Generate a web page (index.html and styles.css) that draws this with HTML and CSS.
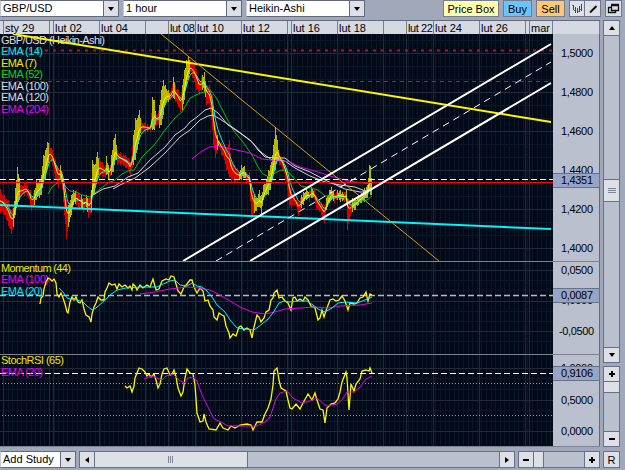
FILE: index.html
```html
<!DOCTYPE html>
<html lang="en">
<head>
  <meta charset="UTF-8">
  <title>GBP/USD chart</title>
  <link rel="stylesheet" href="styles.css">
</head>
<body>
  <header class="toolbar">
    <div class="select"><span class="value">GBP/USD</span><span class="drop"><i class="tri down"></i></span></div>
    <div class="select"><span class="value">1 hour</span><span class="drop"><i class="tri down"></i></span></div>
    <div class="select"><span class="value">Heikin-Ashi</span><span class="drop"><i class="tri down"></i></span></div>
    <div class="actions">
      <button class="btn price-box">Price Box</button>
      <button class="btn buy">Buy</button>
      <button class="btn sell">Sell</button>
      <div class="tools">
        <button class="tool"><svg width="14" height="14" viewBox="0 0 14 14"><path d="M3.500 3v5M5.500 5v6M7.500 6v5M9.500 4v6M11.500 2v7" stroke="#444" fill="none"/><path d="M2 3.500h1M4 8.500h1M8 9.500h1M10 7.500h1" stroke="#777"/></svg></button>
        <button class="tool"><svg width="14" height="14" viewBox="0 0 14 14"><path d="M4 10.500L10.500 4" stroke="#111" stroke-width="2"/></svg></button>
      </div>
      <button class="tool window"><svg width="15" height="14" viewBox="0 0 15 14"><path d="M5.500 3.500h7v5h-7zM5 2.500h8M5 5.500H2.500v5h7V9" stroke="#111" fill="none" stroke-width="1.300"/></svg></button>
    </div>
  </header>

  <main class="workspace">
    <section class="chart">
      <div class="dates">
        <span class="w-edge"></span>
        <span class="w-day">sty 29</span>
        <span class="w-gap"></span>
        <span class="w-day">lut 02</span>
        <span class="w-day">lut 04</span>
        <span class="w-half"></span>
        <span class="w-08">lut 08</span>
        <span class="w-10">lut 10</span>
        <span class="w-day">lut 12</span>
        <span class="w-gap"></span>
        <span class="w-16">lut 16</span>
        <span class="w-day">lut 18</span>
        <span class="w-half"></span>
        <span class="w-22">lut 22</span>
        <span class="w-day">lut 24</span>
        <span class="w-day">lut 26</span>
        <span class="w-gap"></span>
        <span class="w-mar">mar</span>
        <span class="w-axis"></span>
      </div>

      <div class="panel price">
        <svg class="plot" id="price" viewBox="0 34 553 227">
          <g class="grid"></g>
          <path class="level thick" d="M5 50.500H552"/>
          <path class="level" d="M0 81.500H552"/>
          <g class="labels">
            <text x="1" y="44" class="light" textLength="104">GBP/USD (Heikin-Ashi)</text>
            <text x="1" y="55" class="cyan" textLength="42">EMA (14)</text>
            <text x="1" y="67" class="yellow" textLength="36">EMA (7)</text>
            <text x="1" y="78" class="green" textLength="42">EMA (52)</text>
            <text x="1" y="90" class="light" textLength="48">EMA (100)</text>
            <text x="1" y="101" class="light" textLength="48">EMA (120)</text>
            <text x="1" y="113" class="magenta" textLength="48">EMA (204)</text>
          </g>
          <g id="bars"></g>
          <polyline class="line green" points="48,194 52,187 57,183 62,182 66,187 70,191 76,192 82,195 90,197 95,193 100,189 108,183 115,180 122,174 128,171 134,170 142,157 155,144 165,130 175,118 182,112 190,98 200,93 211,91 217,99 225,115 233,130 243,142 252,155 258,167 263,174 269,177 275,173 281,170 287,171 293,177 301,186 310,188 318,190 325,196 335,196 345,198 352,202 360,201 367,200 372,196"/>
          <polyline class="line light" points="93,195 103,189 115,186 128,177 138,173 150,160 165,147 175,135 185,128 190,122 197,117 205,110 211,108 218,113 228,125 240,133 252,142 258,150 265,157 275,158 285,158 295,166 310,172 325,180 345,189 360,192 367,192 371,188"/>
          <polyline class="line light" points="113,189 120,185 135,178 150,167 165,153 180,137 190,130 200,120 208,116 213,115 220,119 235,129 250,140 262,153 272,160 285,161 295,168 310,176 325,182 340,185 355,187 365,191 372,190"/>
          <polyline class="line magenta" points="192,159 202,151 210,147 220,146 232,149 250,153 262,159 280,161 290,162 300,167 315,171 330,176 345,180 355,182 371,184"/>
          <polyline class="line cyan" id="ema14"/>
          <polyline class="line yellow" id="ema7"/>
          <path class="current" d="M0 179.500H553"/>
          <path class="support" d="M0 182.500H553"/>
          <path class="trend cyan" d="M0 205L551 229"/>
          <path class="trend yellow" d="M13 34L551 122"/>
          <path class="line orange" d="M161 34L439 261"/>
          <path class="trend white" d="M183 261L551 44M250 261L551 83"/>
          <path class="line white mid" d="M216 261L551 62"/>
        </svg>
        <svg class="axis" viewBox="553 34 47 227">
          <text x="561" y="57" textLength="32">1,5000</text>
          <text x="561" y="96" textLength="32">1,4800</text>
          <text x="561" y="135" textLength="32">1,4600</text>
          <text x="561" y="174" textLength="32">1,4400</text>
          <text x="561" y="213" textLength="32">1,4200</text>
          <text x="561" y="252" textLength="32">1,4000</text>
          <rect x="552" y="173.500" width="47.500" height="14"/>
          <text x="561" y="184" textLength="32">1,4351</text>
        </svg>
      </div>

      <div class="panel study">
        <svg class="plot" viewBox="0 261 553 92">
          <g class="grid"></g>
          <path class="divider" d="M0 261.500H553"/>
          <path class="current dim" d="M0 295.500H553"/>
          <g class="labels">
            <text x="1" y="272" class="yellow" textLength="70">Momentum (44)</text>
            <text x="1" y="283" class="magenta" textLength="48">EMA (100)</text>
            <text x="1" y="295" class="cyan" textLength="42">EMA (20)</text>
          </g>
          <polyline class="line yellow osc" points="40,304 41,298 43,296 44,289 46,282 48,278 50,279 52,281 54,279 56,283 57,294 59,297 61,293 63,298 65,304 67,312 68,313 70,302 72,297 74,300 76,297 78,302 80,303 82,300 84,309 86,315 89,317 91,322 92,314 94,307 96,303 98,297 101,300 104,300 105,292 107,288 109,283 112,285 115,284 117,289 119,284 122,287 125,285 128,288 130,286 132,290 133,284 135,286 137,290 140,285 143,288 147,285 150,287 153,279 156,290 159,289 162,281 166,279 169,280 171,276 174,277 176,284 178,291 181,294 184,287 187,284 190,280 192,280 194,287 197,293 200,288 203,291 205,301 208,300 210,306 213,310 214,317 217,320 219,313 222,315 224,316 226,326 229,333 230,338 233,334 236,336 239,327 241,326 244,330 247,328 250,330 252,338 254,327 257,315 259,317 261,322 264,318 266,312 269,310 271,300 273,298 274,293 277,290 279,298 282,297 285,301 288,303 291,310 293,298 295,297 297,301 300,299 303,301 305,297 308,300 311,306 315,308 318,320 320,318 322,310 324,317 327,308 330,300 333,299 336,301 339,300 342,296 345,301 348,310 350,303 354,304 357,303 360,298 363,297 366,292 367,297 368,301 370,294 372,295"/>
          <polyline class="line magenta" points="140,294 155,292 170,289 188,287 200,288 210,290 218,294 230,301 240,307 252,312 265,314 275,312 285,309 300,308 315,307 328,308 340,306 360,305 372,303"/>
          <polyline class="line cyan" points="59,288 63,292 67,298 71,299 77,300 83,302 87,306 92,310 96,308 104,301 110,295 117,290 126,288 140,287 157,287 163,284 170,281 175,280 180,285 187,286 192,283 197,286 202,287 207,291 212,297 217,305 225,312 230,320 237,328 245,329 254,330 262,324 268,319 273,313 279,303 284,301 290,302 298,301 307,301 313,305 318,309 325,312 332,308 338,303 345,302 357,303 365,300 372,297"/>
        </svg>
        <svg class="axis" viewBox="553 261 47 92">
          <path class="divider" d="M553 261.500H600"/>
          <text x="561" y="274" textLength="32">0,0500</text>
          <text x="561" y="304" textLength="32">0,0000</text>
          <text x="559" y="335" textLength="35">-0,0500</text>
          <rect x="552" y="288.500" width="47.500" height="14"/>
          <text x="561" y="299" textLength="32">0,0087</text>
        </svg>
      </div>

      <div class="panel study last">
        <svg class="plot" viewBox="0 353 553 94">
          <g class="grid"></g>
          <path class="divider" d="M0 354.500H553M0 446.500H553"/>
          <path class="current" d="M0 373.500H553"/>
          <path class="band" d="M2 383.500H552M2 415.500H552"/>
          <g class="labels">
            <text x="1" y="364" class="yellow" textLength="63">StochRSI (65)</text>
            <text x="1" y="376" class="magenta" textLength="42">EMA (20)</text>
          </g>
          <polyline class="line yellow osc" points="125,386 127,388 130,386 132,392 134,386 135,378 137,373 139,368 142,369 145,372 147,376 149,374 151,377 154,374 156,380 158,388 160,384 162,374 164,369 167,368 170,375 172,374 174,370 176,377 178,388 181,396 183,392 185,378 187,369 190,373 193,374 195,385 197,413 200,422 203,421 204,414 206,422 209,429 216,430 220,423 223,428 228,430 231,426 235,428 240,425 247,424 251,425 253,430 257,422 262,422 265,414 268,408 271,399 273,385 274,371 277,368 279,380 281,388 286,391 288,400 290,408 292,409 296,404 300,409 303,403 308,394 312,400 315,393 317,400 320,409 323,410 325,423 327,408 331,404 335,403 338,399 340,392 342,382 346,372 347,378 349,410 351,384 354,391 356,384 360,379 362,371 366,370 369,371 370,368 372,373"/>
          <polyline class="line magenta" points="144,379 149,377 153,376 157,378 162,380 166,376 173,374 179,380 184,383 188,378 193,377 197,381 202,395 208,407 214,419 221,422 228,426 240,426 257,426 265,422 270,417 276,399 280,393 287,391 293,398 302,403 310,401 317,398 326,406 337,404 342,400 347,392 354,392 360,387 366,379 372,376"/>
        </svg>
        <svg class="axis" viewBox="553 353 47 94">
          <path class="divider" d="M553 354.500H600M553 446.500H600"/>
          <text x="561" y="372" textLength="32">1,0000</text>
          <text x="561" y="404" textLength="32">0,5000</text>
          <text x="561" y="435" textLength="32">0,0000</text>
          <rect x="552" y="366.500" width="47.500" height="14"/>
          <text x="561" y="377" textLength="32">0,9106</text>
        </svg>
      </div>
    </section>

    <aside class="side">
      <div class="vscroll pan">
        <span class="cap"><i class="tri up"></i></span>
        <span class="track-top"></span>
        <span class="thumb"><i class="grip"></i></span>
        <span class="track"></span>
        <span class="cap"><i class="tri down"></i></span>
      </div>
      <div class="vscroll zoom">
        <span class="cap"><i class="plus"></i></span>
        <span class="thumb small"></span>
        <span class="track"></span>
        <span class="cap"><i class="minus"></i></span>
      </div>
    </aside>
  </main>

  <footer class="bottom">
    <div class="select study-select"><span class="value">Add Study</span><span class="drop"><i class="tri down"></i></span></div>
    <div class="hscroll pan">
      <span class="cap"><i class="tri left"></i></span>
      <span class="thumb"><i class="grip vertical"></i></span>
      <span class="track"></span>
      <span class="cap"><i class="tri right"></i></span>
    </div>
    <div class="hscroll zoom">
      <span class="cap"><i class="minus"></i></span>
      <span class="thumb small"></span>
      <span class="track"></span>
      <span class="cap"><i class="plus"></i></span>
    </div>
    <button class="reset">R</button>
  </footer>

  <script src="chart.js"></script>
</body>
</html>
```
FILE: styles.css
```css
body {
  margin: 0;
  width: 625px;
  height: 470px;
  overflow: hidden;
  background: #a1a8ba;
  font-family: "Liberation Sans", Arial, sans-serif;
  font-size: 11px;
  color: #000;
}

* {
  box-sizing: border-box;
}

button {
  font: inherit;
  color: inherit;
  padding: 0;
}

/* Toolbar */
.toolbar {
  display: flex;
  gap: 4px;
  height: 20px;
}

.select {
  display: flex;
  width: 119px;
  height: 17px;
  background: #fff;
  border: 1px solid #62697b;
  border-left-color: #c4cad6;
}

.value {
  flex: 1;
  padding-left: 2px;
  line-height: 15px;
}

.drop {
  display: flex;
  align-items: center;
  justify-content: center;
  width: 15px;
  background: #dde0e7;
  border-left: 1px solid #62697b;
}

.actions {
  display: flex;
  gap: 4px;
  margin-left: 74px;
}

.btn {
  width: 29px;
  height: 17px;
  border: 1px solid #757c8c;
}

.price-box {
  width: 56px;
  background: #ffffb2;
}

.buy {
  background: #69c3ff;
}

.sell {
  background: #ffc875;
}

.tools {
  display: flex;
}

.tool {
  display: flex;
  align-items: center;
  justify-content: center;
  width: 16px;
  height: 17px;
  background: #dde0e7;
  border: 1px solid #70778a;
}

.tool + .tool {
  border-left: 0;
}

.window {
  width: 17px;
}

/* Chart */
.workspace {
  display: flex;
  gap: 3px;
  height: 427px;
}

.chart {
  width: 600px;
}

.dates {
  display: flex;
  height: 14px;
  background: #d5d9e2;
  border-top: 1px solid #62697b;
}

.dates span {
  border-right: 1px solid #777e90;
  padding-left: 1px;
  line-height: 14px;
  white-space: nowrap;
  overflow: hidden;
}

.dates .w-edge { width: 4px; }
.dates .w-day { width: 46px; }
.dates .w-gap { width: 4px; padding: 0; }
.dates .w-half { width: 23px; }
.dates .w-08 { width: 27px; letter-spacing: -0.4px; }
.dates .w-10 { width: 46px; }
.dates .w-16 { width: 46px; }
.dates .w-22 { width: 27px; letter-spacing: -0.4px; }
.dates .w-mar { width: 23px; }
.dates .w-axis { flex: 1; }

.panel {
  display: flex;
  height: 92px;
}

.panel.price {
  height: 227px;
}

.panel.last {
  height: 94px;
}

.panel svg {
  display: block;
  height: 100%;
}

.plot {
  width: 553px;
  background: #020a19;
}

.axis {
  width: 47px;
  background: #bac0ce;
  box-shadow: inset -1px 0 #62697b;
}

.divider {
  stroke: #7d8290;
}

.axis text {
  font-size: 11px;
}

.axis rect {
  fill: #98a4c3;
  stroke: #68718a;
}

.grid path {
  shape-rendering: crispEdges;
  fill: none;
}

.minor { stroke: #0c1726; }
.major { stroke: #202a39; }

.line,
.trend {
  fill: none;
}

.trend { stroke-width: 2; }
.mid { stroke-dasharray: 7 5; }
.osc { stroke-width: 1.3; }

path.yellow, polyline.yellow { stroke: #fff500; }
path.cyan, polyline.cyan { stroke: #00f5ff; }
polyline.green { stroke: #00bd16; }
polyline.magenta { stroke: #e600e6; }
polyline.light { stroke: #d0d2d8; }
path.white { stroke: #fff; }
path.orange { stroke: #d69e08; }

.level {
  stroke: #d01018;
  stroke-dasharray: 4 4;
}

.level.thick {
  stroke: #b90f18;
  stroke-width: 2;
  stroke-dasharray: 3 5;
}

.current {
  stroke: #fff;
  stroke-dasharray: 6 3;
}

.current.dim {
  stroke: #b5bac7;
  stroke-width: 1.5;
}

.support { stroke: #ff0010; }

.band {
  stroke: #00d5de;
  stroke-dasharray: 1 2;
}

.up { stroke: #bcb800; }
.down { stroke: #d80000; }

#bars path {
  shape-rendering: crispEdges;
}

.labels text.light { fill: #dadce0; }
.labels text.cyan { fill: #00e5ee; }
.labels text.yellow { fill: #eee500; }
.labels text.green { fill: #00d815; }
.labels text.magenta { fill: #ed00ed; }

/* Scrollbars */
.side {
  display: flex;
  flex-direction: column;
  gap: 3px;
  width: 17px;
}

.vscroll,
.hscroll {
  display: flex;
  background: #bac0ce;
  border: 1px solid #687084;
}

.vscroll {
  flex-direction: column;
}

.side .pan { height: 343px; }
.side .zoom { height: 81px; }

.cap,
.thumb {
  display: flex;
  align-items: center;
  justify-content: center;
  background: #dde0e7;
}

.track { flex: 1; }

.vscroll .cap { height: 15px; }
.vscroll .cap:first-child,
.vscroll .thumb { border-bottom: 1px solid #687084; }
.vscroll .cap:last-child { border-top: 1px solid #687084; }
.track-top { height: 143px; }
.vscroll .thumb { height: 23px; border-top: 1px solid #687084; }
.vscroll .small { height: 11px; border-top: 0; }

.bottom {
  display: flex;
  gap: 3px;
  margin-top: 4px;
  height: 17px;
}

.study-select {
  width: 76px;
}

.hscroll.pan { width: 436px; }
.hscroll.zoom { width: 82px; }
.hscroll .cap { width: 15px; }
.hscroll .cap:first-child,
.hscroll .thumb { border-right: 1px solid #687084; }
.hscroll .cap:last-child { border-left: 1px solid #687084; }
.hscroll .thumb { width: 153px; }
.hscroll .small { width: 10px; }

.reset {
  width: 17px;
  height: 17px;
  background: #dde0e7;
  border: 1px solid #687084;
}

/* Glyphs */
.tri {
  border: 3px solid transparent;
}

.tri.down { border-top: 4px solid #000; border-bottom: 0; }
.tri.up { border-bottom: 4px solid #000; border-top: 0; }
.tri.left { border-right: 4px solid #000; border-left: 0; }
.tri.right { border-left: 4px solid #000; border-right: 0; }

.minus {
  width: 6px;
  height: 2px;
  background: #000;
}

.plus {
  width: 6px;
  height: 6px;
  background:
    linear-gradient(#000, #000) center / 6px 2px no-repeat,
    linear-gradient(#000, #000) center / 2px 6px no-repeat;
}

.grip {
  width: 8px;
  height: 6px;
  background: repeating-linear-gradient(#7e8493 0 1px, transparent 1px 2px);
}

.grip.vertical {
  width: 6px;
  height: 7px;
  background: repeating-linear-gradient(90deg, #7e8493 0 1px, transparent 1px 2px);
}
```
FILE: chart.js
```javascript
const NS = 'http://www.w3.org/2000/svg';

function addPath(parent, d, cls) {
  const path = document.createElementNS(NS, 'path');
  path.setAttribute('d', d);
  path.setAttribute('class', cls);
  parent.appendChild(path);
}

// Horizontal major and minor lines for each panel, top to bottom
const rows = [
  { major: [53, 92, 131, 170, 209, 248], minor: [40, 66, 79, 105, 118, 144, 157, 183, 196, 222, 235] },
  { major: [270, 301, 331], minor: [280, 290, 311, 321, 341] },
  { major: [368, 400, 431], minor: [378, 389, 410, 421] }
];
const days = [3, 49, 53, 99, 145, 168, 195, 241, 287, 291, 337, 383, 406, 433, 479, 525, 529];

document.querySelectorAll('.grid').forEach((grid, i) => {
  let minor = '';
  for (let x = 3; x < 553; x += 4.6) {
    minor += `M${Math.round(x) + 0.5} 30V450`;
  }
  rows[i].minor.forEach(y => { minor += `M0 ${y + 0.5}H553`; });
  addPath(grid, minor, 'minor');
  let major = '';
  days.forEach(x => { major += `M${x + 0.5} 30V450`; });
  rows[i].major.forEach(y => { major += `M0 ${y + 0.5}H553`; });
  addPath(grid, major, 'major');
});

// x, top, bottom, direction
const bars = `0 189 213 d,4 195 215 d,8 200 226 d,11 210 234 d,13 208 227 u,15 188 215 u,17 167 205 u,19 178 200 u,
20 185 198 d,24 182 196 d,26 183 194 d,30 190 206 d,31 195 211 d,34 190 205 u,36 180 200 u,39 180 198 u,41 175 195 u,
43 155 182 u,45 150 180 u,47 142 168 u,49 142 160 d,52 150 165 d,55 160 180 d,58 168 188 d,60 165 180 u,62 172 190 d,
64 185 215 d,66 200 239 d,68 205 227 u,71 195 215 u,73 190 205 u,76 190 205 d,79 193 210 d,81 195 208 u,83 198 213 d,
86 195 207 u,88 198 218 d,91 190 212 u,92 160 195 u,94 165 195 u,97 152 180 u,99 157 176 d,102 162 178 d,105 165 178 d,
106 156 175 u,109 168 182 d,111 155 175 u,113 140 172 u,115 134 160 u,117 150 165 d,120 152 165 d,125 155 168 d,
128 158 170 d,130 162 177 d,133 135 165 u,135 118 160 u,137 118 150 u,139 110 140 u,141 120 132 d,145 122 133 d,
150 125 132 d,152 97 130 u,154 100 130 u,156 115 125 d,159 105 128 u,161 90 125 u,163 80 115 u,165 85 105 u,168 90 102 u,
170 92 100 d,173 77 98 u,175 85 102 d,178 90 107 d,180 95 112 d,182 85 110 u,184 70 100 u,186 60 85 u,188 57 78 u,
190 60 72 d,192 62 78 d,194 65 82 d,196 70 90 d,199 80 95 d,202 75 90 u,204 72 92 u,206 85 105 d,209 85 105 d,
212 95 130 d,213 112 145 d,215 125 158 d,217 135 150 u,219 140 148 d,221 142 155 d,224 145 160 d,226 148 170 d,
229 140 178 d,231 160 182 d,234 165 183 d,237 168 182 d,239 172 180 u,241 165 180 u,244 166 178 u,246 172 184 d,
249 172 185 d,251 185 220 d,254 195 213 u,256 198 211 u,259 190 207 u,261 195 215 u,263 185 200 u,266 180 195 u,
268 170 195 u,270 165 190 u,272 155 180 u,273 145 175 u,275 128 170 u,277 140 160 u,279 153 165 d,282 157 170 d,
285 165 180 d,287 170 190 d,289 180 208 d,291 190 208 d,294 195 205 d,296 200 207 d,298 202 216 d,301 195 208 u,
303 192 205 u,306 188 200 u,309 190 202 d,311 187 198 u,314 190 200 d,316 195 210 d,319 200 212 d,322 204 218 d,
324 205 223 d,326 198 210 u,329 190 203 u,331 187 200 u,334 193 203 d,337 190 200 u,340 190 202 u,344 192 202 d,
346 190 200 u,347 198 230 d,350 200 216 d,352 198 212 u,355 198 210 u,358 195 205 u,361 193 203 u,364 188 202 u,
367 185 198 u,369 165 190 u,370 166 195 u,371 178 195 u`.split(',').map(row => {
  const [x, top, bottom, dir] = row.trim().split(' ');
  return { x: +x, top: +top, bottom: +bottom, dir };
});

const group = document.getElementById('bars');
const mids = [];
bars.forEach((bar, i) => {
  const next = bars[i + 1] || bar;
  const cls = bar.dir === 'u' ? 'up' : 'down';
  const span = Math.max(1, next.x - bar.x);
  for (let k = 0; k < span; k++) {
    const t = k / span;
    // bars between two listed ones are shorter: bodies without wicks
    const cut = k === 0 ? 0 : 1 + (bar.x + k) % 3;
    const top = Math.round(bar.top + (next.top - bar.top) * t + cut);
    const bottom = Math.round(bar.bottom + (next.bottom - bar.bottom) * t - cut);
    if (bottom > top) {
      addPath(group, `M${bar.x + k + 0.5} ${top}V${bottom}`, cls);
    }
    mids.push([bar.x + k, (bar.top + bar.bottom) / 2 * (1 - t) + (next.top + next.bottom) / 2 * t]);
  }
});

function ema(id, alpha) {
  let value = mids[0][1];
  const points = mids.map(([x, y]) => {
    value += (y - value) * alpha;
    return `${x},${value.toFixed(1)}`;
  });
  document.getElementById(id).setAttribute('points', points.join(' '));
}

ema('ema14', 0.2);
ema('ema7', 0.42);
```
